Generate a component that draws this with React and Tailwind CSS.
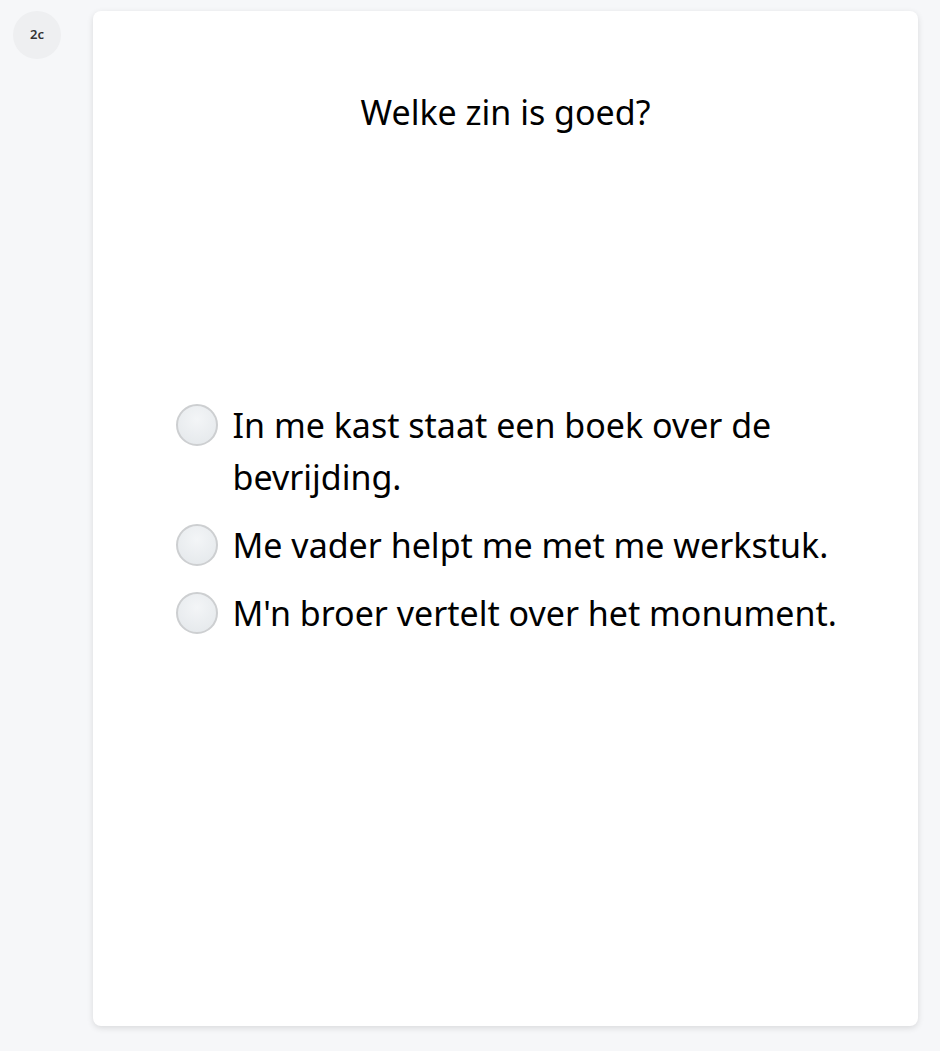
import React from 'react';

const options = [
  'In me kast staat een boek over de bevrijding.',
  'Me vader helpt me met me werkstuk.',
  "M'n broer vertelt over het monument.",
];

const Radio = () => (
  <span className="mt-[5px] block h-[42px] w-[42px] shrink-0 rounded-full border-2 border-[#cdcfd1] bg-[radial-gradient(circle_at_50%_35%,#f3f5f7,#e3e7ea)]" />
);

export default function App() {
  return (
    <div className="flex min-h-[1051px] gap-8 bg-[#f6f7f9] px-[13px] pt-[11px] pb-[25px] font-['Noto_Sans',sans-serif] text-black">
      {/* Vraagnummer */}
      <div className="flex h-12 w-12 shrink-0 items-center justify-center rounded-full bg-[#eeeff1] text-[13px] font-semibold text-[#333]">
        2c
      </div>

      {/* Vraagkaart */}
      <div className="flex h-[1015px] w-[825px] flex-col items-center rounded-lg bg-white shadow-[0_2px_6px_rgba(0,0,0,0.12)]">
        <h1 className="mt-[80px] text-[34px] leading-[42px] font-normal">Welke zin is goed?</h1>

        <div className="mt-[266px] flex w-[680px] flex-col gap-4 pl-[10px]">
          {options.map((text) => (
            <label key={text} className="flex cursor-pointer items-start gap-[15px]">
              <Radio />
              <span className="text-[34px] leading-[52px]">{text}</span>
            </label>
          ))}
        </div>
      </div>
    </div>
  );
}
